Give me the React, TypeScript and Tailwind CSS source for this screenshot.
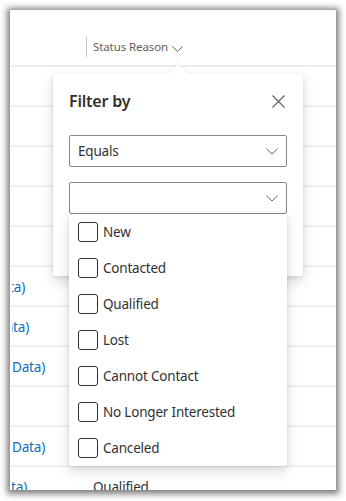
const rows = [
  { link: "", linkW: "w-0", status: "" },
  { link: "", linkW: "w-0", status: "" },
  { link: "", linkW: "w-0", status: "" },
  { link: "", linkW: "w-0", status: "" },
  { link: "", linkW: "w-0", status: "" },
  { link: "(Sample Data)", linkW: "w-[13px]", status: "" },
  { link: "(Sample Data)", linkW: "w-[17px]", status: "" },
  { link: "(Sample Data)", linkW: "w-[33px]", status: "" },
  { link: "", linkW: "w-0", status: "" },
  { link: "(Sample Data)", linkW: "w-[33px]", status: "" },
  { link: "(Sample Data)", linkW: "w-[15px]", status: "Qualified" },
];

const options = [
  "New",
  "Contacted",
  "Qualified",
  "Lost",
  "Cannot Contact",
  "No Longer Interested",
  "Canceled",
];

function Chevron({ className }: { className?: string }) {
  return (
    <svg width="12" height="7" viewBox="0 0 12 7" fill="none" className={className}>
      <path d="M0.5 0.8 L6 6 L11.5 0.8" stroke="#605e5c" strokeWidth="1" />
    </svg>
  );
}

export default function App() {
  return (
    <div
      className="w-[346px] h-[501px] bg-white pt-[10px] pl-[10px]"
      style={{ fontFamily: '"Noto Sans", "Open Sans", sans-serif' }}
    >
      <div className="relative w-[326px] h-[480px] bg-white shadow-[0_1px_6px_3px_rgba(0,0,0,0.5)]">
        {/* GRID */}
        <div className="h-full overflow-hidden">
          <div className="h-[57px] flex items-end border-b-2 border-[#eeeeee]">
            <div className="w-[76px] shrink-0" />
            <div className="h-[36px] flex items-center">
              <div className="w-px h-[20px] bg-[#c8c6c4]" />
              <span className="ml-[6px] text-[11.5px] tracking-[-0.1px] text-[#605e5c]">Status Reason</span>
              <svg width="11" height="6" viewBox="0 0 11 6" fill="none" className="ml-[4px] mt-[3px]">
                <path d="M0.5 0.6 L5.5 5.4 L10.5 0.6" stroke="#605e5c" strokeWidth="1" />
              </svg>
            </div>
          </div>

          {rows.map((r, i) => (
            <div key={i} className="h-[40px] flex items-center pt-[2px] border-b-2 border-[#f0f0f0]">
              <div className="w-[76px] shrink-0">
                <div className={`${r.linkW} ml-[2px] overflow-hidden flex justify-end`}>
                  <span className="whitespace-nowrap text-[13.5px] tracking-[-0.2px] text-[#0f6cbd]">{r.link}</span>
                </div>
              </div>
              <span className="ml-[7px] text-[13.5px] tracking-[-0.2px] text-[#323130]">{r.status}</span>
            </div>
          ))}
        </div>

        {/* FILTER CALLOUT */}
        <div className="absolute left-[43px] top-[64px] w-[250px] h-[202px] bg-white rounded-[2px] shadow-[0_6px_14px_rgba(0,0,0,0.13),0_1px_4px_rgba(0,0,0,0.11)]">
          <div className="absolute left-[118px] -top-[7px] w-[14px] h-[14px] rotate-45 bg-white shadow-[-1px_-1px_3px_rgba(0,0,0,0.06)]" />
          <div className="relative px-4 pt-4">
            <div className="flex items-center justify-between h-[22px]">
              <h2 className="text-[16px] tracking-[-0.2px] font-semibold text-[#323130]">Filter by</h2>
              <svg width="13" height="13" viewBox="0 0 13 13" className="mr-[2px]">
                <path d="M0.5 0.5 L12.5 12.5 M12.5 0.5 L0.5 12.5" stroke="#605e5c" strokeWidth="1.1" />
              </svg>
            </div>

            <div className="mt-[23px] h-[32px] flex items-center justify-between border border-[#8a8886] rounded-[2px] pl-[8px] pr-[8px]">
              <span className="text-[13.5px] tracking-[-0.2px] text-[#323130]">Equals</span>
              <Chevron />
            </div>

            <div className="mt-[15px] h-[32px] flex items-center justify-end border border-[#8a8886] rounded-[2px] pr-[8px]">
              <Chevron />
            </div>
          </div>
        </div>

        {/* OPTIONS LIST */}
        <div className="absolute left-[59px] top-[204px] w-[218px] bg-white rounded-b-[2px] shadow-[0_6px_14px_rgba(0,0,0,0.13),0_1px_4px_rgba(0,0,0,0.11)]">
          {options.map((o) => (
            <div key={o} className="h-[36px] flex items-center pl-[9px] gap-[5px]">
              <div className="w-[20px] h-[20px] border border-[#323130] rounded-[3px]" />
              <span className="text-[13.5px] tracking-[-0.2px] text-[#323130]">{o}</span>
            </div>
          ))}
        </div>
      </div>
    </div>
  );
}
